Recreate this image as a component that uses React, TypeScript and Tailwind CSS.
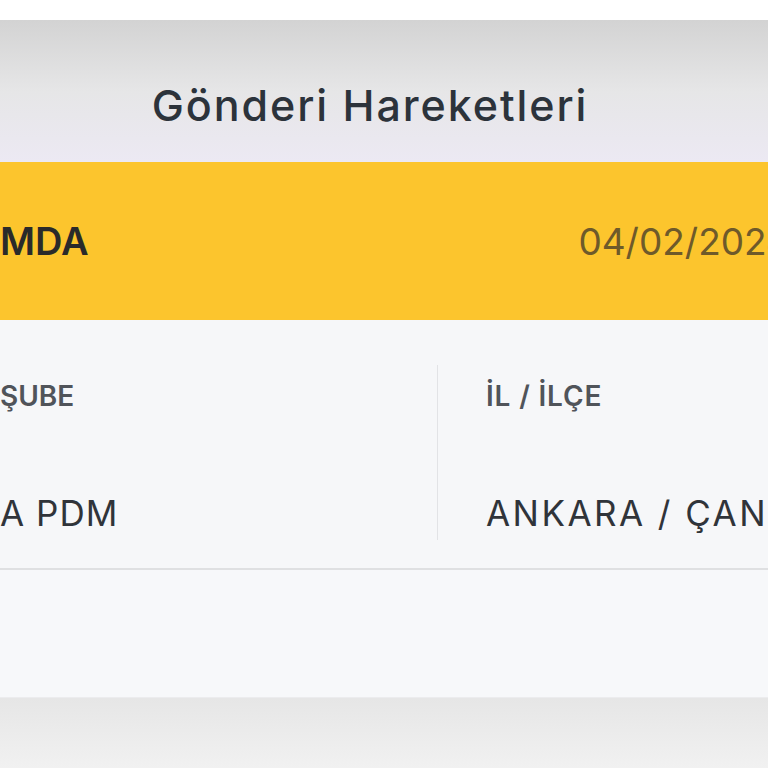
const font = { fontFamily: 'Inter, "Liberation Sans", Arial, sans-serif' };

const App = () => {
  return (
    <div className="w-[768px] h-[768px] overflow-hidden bg-white flex flex-col" style={font}>
      <div className="h-[20px] bg-white" />
      <div className="h-[142px] bg-gradient-to-b from-[#d3d3d3] via-[#e6e6e7] to-[#ece9f3] flex items-center justify-center pt-[28px] pr-[28px]">
        <h2 className="text-[43px] font-medium tracking-[0.045em] text-[#2c333b] leading-none">Gönderi Hareketleri</h2>
      </div>
      <div className="h-[158px] bg-[#fcc52d] flex items-center justify-between whitespace-nowrap overflow-hidden">
        <span className="text-[38px] font-semibold text-[#2a2a2a] leading-none">MDA</span>
        <span className="text-[37px] text-[#6e5a2a] leading-none -mr-[22px]">04/02/2024</span>
      </div>
      <div className="h-[250px] bg-[#f6f7f9] border-b-2 border-[#dfe0e2] flex overflow-hidden">
        <div className="w-[437px] shrink-0 flex flex-col whitespace-nowrap">
          <div className="pt-[62px] text-[28px] font-semibold text-[#50545a] leading-none">ŞUBE</div>
          <div className="pt-[86px] text-[35px] tracking-[0.03em] text-[#30343a] leading-none">A PDM</div>
        </div>
        <div className="mt-[45px] mb-[28px] w-px bg-[#e2e3e6] shrink-0" />
        <div className="pl-[48px] flex flex-col whitespace-nowrap">
          <div className="pt-[62px] text-[28px] font-semibold tracking-[0.03em] text-[#50545a] leading-none">İL / İLÇE</div>
          <div className="pt-[86px] text-[35px] tracking-[0.07em] text-[#30343a] leading-none">ANKARA / ÇANKAYA</div>
        </div>
      </div>
      <div className="h-[128px] bg-[#f7f8fa] border-b border-[#ececee]" />
      <div className="flex-1 bg-gradient-to-b from-[#e6e6e6] to-[#f1f1f1]" />
    </div>
  );
};

export default App;
